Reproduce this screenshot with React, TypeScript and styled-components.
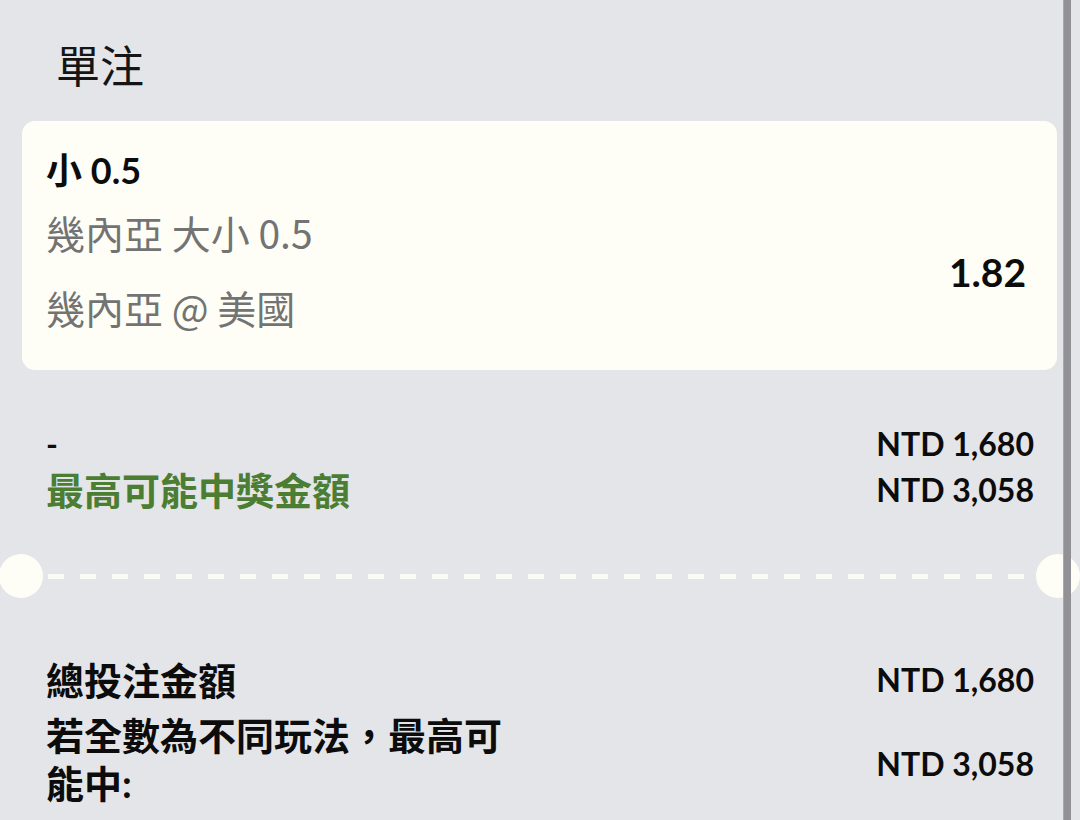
import React from "react";
import styled, { createGlobalStyle } from "styled-components";

const GlobalStyle = createGlobalStyle`
  html, body {
    margin: 0;
    padding: 0;
    background: #e4e5e8;
  }
  body {
    font-family: Lato, "Noto Sans CJK TC", sans-serif;
    color: #111;
    overflow: hidden;
  }
`;

const Page = styled.div`
  position: relative;
  width: 1080px;
  height: 820px;
  overflow: hidden;
  background: #e4e5e8;
`;

const Panel = styled.div`
  display: flex;
  flex-direction: column;
  padding: 0 23px 0 22px;
`;

const Title = styled.h2`
  margin: 0 0 29px;
  padding: 36px 0 0 34px;
  font-family: "Noto Sans CJK TC", sans-serif;
  font-size: 44px;
  font-weight: 400;
  line-height: 56px;
  color: #151515;
`;

const BetCard = styled.div`
  display: flex;
  align-items: center;
  justify-content: space-between;
  height: 249px;
  box-sizing: border-box;
  padding: 0 31px 0 24px;
  background: #fefef6;
  border-radius: 13px;
`;

const BetInfo = styled.div`
  display: flex;
  flex-direction: column;
  align-self: flex-start;
  padding-top: 27px;
`;

const Selection = styled.div`
  font-size: 36px;
  font-weight: 700;
  line-height: 44px;
  color: #0c0c0c;
`;

const SubLine = styled.div<{ $gap: number }>`
  margin-top: ${({ $gap }) => $gap}px;
  font-family: "Noto Sans CJK TC", sans-serif;
  font-size: 39px;
  font-weight: 400;
  line-height: 48px;
  color: #737373;
`;

const Odds = styled.div`
  margin-top: 52px;
  font-size: 39px;
  font-weight: 700;
  color: #0c0c0c;
`;

const Summary = styled.div<{ $top: number; $gap: number }>`
  display: flex;
  flex-direction: column;
  gap: ${({ $gap }) => $gap}px;
  margin-top: ${({ $top }) => $top}px;
  padding: 0 23px 0 24px;
`;

const Row = styled.div`
  display: flex;
  align-items: center;
  justify-content: space-between;
`;

const Label = styled.div<{ $green?: boolean }>`
  max-width: 480px;
  font-size: 38px;
  font-weight: 700;
  line-height: 48px;
  color: ${({ $green }) => ($green ? "#4b7d33" : "#0c0c0c")};
`;

const Dash = styled.div`
  font-size: 32px;
  font-weight: 700;
  line-height: 44px;
  color: #0c0c0c;
`;

const Amount = styled.div<{ $drop?: number }>`
  padding-top: ${({ $drop = 0 }) => $drop}px;
  font-size: 32px;
  font-weight: 700;
  line-height: 44px;
  color: #0c0c0c;
  white-space: nowrap;
`;

const Divider = styled.div`
  display: flex;
  align-items: center;
  margin: 40px -23px 0 -23px;
`;

const Notch = styled.div`
  width: 44px;
  height: 44px;
  flex-shrink: 0;
  border-radius: 50%;
  background: #fefef6;
`;

const DashedLine = styled.div`
  flex: 1;
  height: 5px;
  margin: 0 6px 0 5px;
  background: repeating-linear-gradient(
    to right,
    #fafaf6 0 16px,
    transparent 16px 32px
  );
`;

const Scrollbar = styled.div`
  position: absolute;
  top: 0;
  right: 9px;
  width: 8px;
  height: 100%;
  background: linear-gradient(to right, #a9a9ad 0 1px, #929296 1px);
`;

export default function App() {
  return (
    <Page>
      <GlobalStyle />
      <Panel>
        <Title>單注</Title>
        <BetCard>
          <BetInfo>
            <Selection>小 0.5</Selection>
            <SubLine $gap={16}>幾內亞 大小 0.5</SubLine>
            <SubLine $gap={27}>幾內亞 @ 美國</SubLine>
          </BetInfo>
          <Odds>1.82</Odds>
        </BetCard>

        <Summary $top={52} $gap={0}>
          <Row>
            <Dash>-</Dash>
            <Amount>NTD 1,680</Amount>
          </Row>
          <Row>
            <Label $green>最高可能中獎金額</Label>
            <Amount>NTD 3,058</Amount>
          </Row>
        </Summary>

        <Divider>
          <Notch />
          <DashedLine />
          <Notch />
        </Divider>

        <Summary $top={58} $gap={7}>
          <Row>
            <Label>總投注金額</Label>
            <Amount>NTD 1,680</Amount>
          </Row>
          <Row>
            <Label>若全數為不同玩法，最高可能中:</Label>
            <Amount $drop={10}>NTD 3,058</Amount>
          </Row>
        </Summary>
      </Panel>
      <Scrollbar />
    </Page>
  );
}
